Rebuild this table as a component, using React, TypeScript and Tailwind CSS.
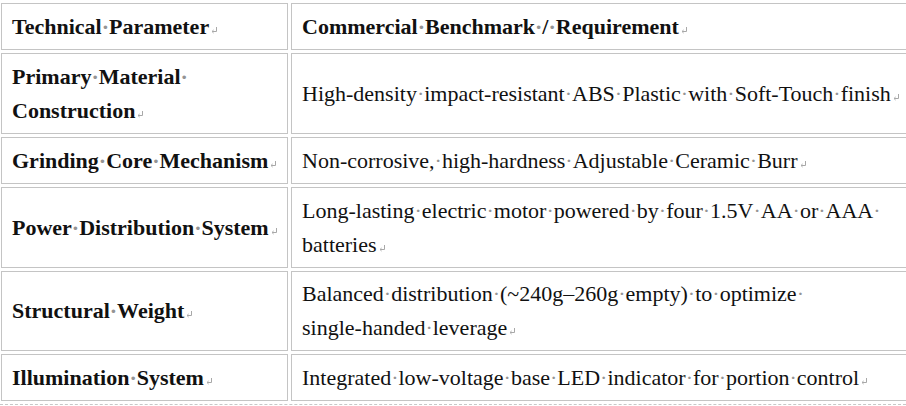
type Row = {
  label: string[]
  value: string[]
  height: string
  header?: boolean
}

const rows: Row[] = [
  { label: ['Technical Parameter'], value: ['Commercial Benchmark / Requirement'], height: 'h-[47px]', header: true },
  {
    label: ['Primary Material ', 'Construction'],
    value: ['High-density impact-resistant ABS Plastic with Soft-Touch finish'],
    height: 'h-[81px]',
  },
  {
    label: ['Grinding Core Mechanism'],
    value: ['Non-corrosive, high-hardness Adjustable Ceramic Burr'],
    height: 'h-[47px]',
  },
  {
    label: ['Power Distribution System'],
    value: ['Long-lasting electric motor powered by four 1.5V AA or AAA ', 'batteries'],
    height: 'h-[81px]',
  },
  {
    label: ['Structural Weight'],
    value: ['Balanced distribution (~240g–260g empty) to optimize ', 'single-handed leverage'],
    height: 'h-[80px]',
  },
  {
    label: ['Illumination System'],
    value: ['Integrated low-voltage base LED indicator for portion control'],
    height: 'h-[47px]',
  },
]

function ReturnMark() {
  return (
    <svg width="7" height="7" viewBox="0 0 7 7" className="ml-[2px] inline-block align-baseline">
      <path d="M5.5 0 V4.5 H1.2" fill="none" stroke="#a8a8a8" strokeWidth="1" />
      <path d="M2.6 3 L1 4.5 L2.6 6" fill="none" stroke="#a8a8a8" strokeWidth="1" />
    </svg>
  )
}

// word-style formatting marks: spaces show as grey middle dots
function MarkedLine({ text, last }: { text: string; last: boolean }) {
  const words = text.split(' ')
  return (
    <span className="block whitespace-nowrap">
      {words.map((word, i) => (
        <span key={i}>
          {word}
          {i < words.length - 1 && <span className="text-[#949494]">·</span>}
        </span>
      ))}
      {last && <ReturnMark />}
    </span>
  )
}

function CellText({ lines }: { lines: string[] }) {
  return (
    <>
      {lines.map((line, i) => (
        <MarkedLine key={i} text={line} last={i === lines.length - 1} />
      ))}
    </>
  )
}

export default function App() {
  return (
    <div
      className="h-[406px] w-[906px] overflow-hidden bg-white text-[#111]"
      style={{ fontFamily: '"Liberation Serif", "Times New Roman", serif' }}
    >
      <table className="-ml-[2px] w-[936px] table-fixed border-separate border-spacing-[3px] text-[22px] leading-[34px]">
        <colgroup>
          <col className="w-[287px]" />
          <col />
        </colgroup>
        <tbody>
          {rows.map((row, i) => (
            <tr key={i}>
              <td className={`${row.height} border border-[#c4c4c4] px-[10px] py-0 align-middle font-bold`}>
                <CellText lines={row.label} />
              </td>
              <td
                className={`${row.height} border border-[#c4c4c4] px-[10px] py-0 align-middle ${
                  row.header ? 'font-bold' : ''
                }`}
              >
                <CellText lines={row.value} />
              </td>
            </tr>
          ))}
        </tbody>
      </table>
      <div className="border-t border-dashed border-[#c8c8c8]" />
    </div>
  )
}
